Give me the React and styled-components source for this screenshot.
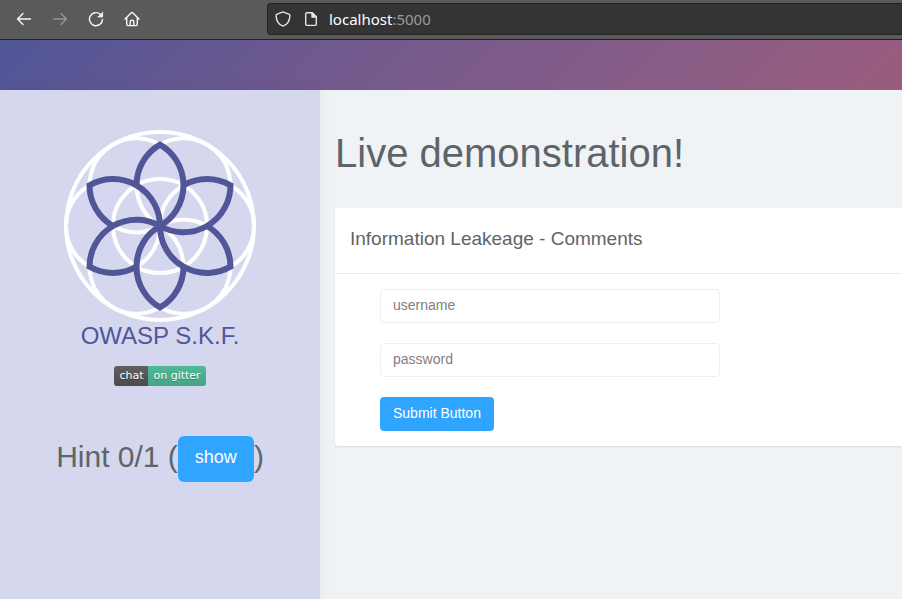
import React from "react";
import styled, { createGlobalStyle } from "styled-components";

const GlobalStyle = createGlobalStyle`
  *, *::before, *::after { box-sizing: border-box; }
  body {
    margin: 0;
    background: #eff3f6;
    color: #5f6468;
    font-family: "Liberation Sans", Arial, sans-serif;
    font-size: 14px;
    line-height: 20px;
  }
  button, input { font: inherit; }
`;

const Page = styled.div`
  min-height: 100vh;
  display: flex;
  flex-direction: column;
`;

const BrowserBar = styled.header`
  display: flex;
  align-items: center;
  height: 40px;
  padding: 0 0 1px 6px;
  background: #5a5a5a;
  border-bottom: 1px solid #222;
`;

const NavButtons = styled.nav`
  display: flex;
  flex: none;
  width: 261px;
`;

const NavButton = styled.button`
  display: flex;
  align-items: center;
  justify-content: center;
  width: 36px;
  height: 32px;
  padding: 0;
  border: 0;
  background: none;
  color: ${(p) => (p.disabled ? "#949494" : "#f8f8f8")};
`;

const AddressBar = styled.div`
  flex: 1;
  display: flex;
  align-items: center;
  gap: 12px;
  height: 32px;
  padding-left: 7px;
  border: 1px solid #212121;
  border-right: 0;
  border-radius: 4px 0 0 4px;
  background: #343434;
  color: #e4e4e4;
`;

const Address = styled.div`
  color: #fff;
  font-family: "Noto Sans", sans-serif;
  font-size: 15px;
  line-height: 20px;
`;

const Port = styled.span`
  color: #9a9a9a;
`;

const Banner = styled.div`
  height: 50px;
  background: linear-gradient(135deg, #505698 0%, #6f598e 35%, #8a5d86 75%, #9b5c7d 100%);
`;

const Columns = styled.div`
  flex: 1;
  display: grid;
  grid-template-columns: 320px minmax(0, 1fr);
`;

const Sidebar = styled.aside`
  display: flex;
  flex-direction: column;
  align-items: center;
  padding-top: 40px;
  background: #d5d7ee;
  box-shadow: 0 0 15px rgba(0, 0, 0, 0.06);
`;

const Brand = styled.div`
  margin: 0 0 16px;
  color: #505698;
  font-size: 24px;
  line-height: 28px;
`;

const Badge = styled.a`
  display: flex;
  height: 20px;
  border-radius: 3px;
  overflow: hidden;
  color: #fff;
  font-family: "DejaVu Sans", sans-serif;
  font-size: 11px;
  line-height: 20px;
  text-decoration: none;
  text-shadow: 0 1px 0 rgba(1, 1, 1, 0.3);
`;

const BadgePart = styled.span`
  padding: 0 5px;
  background: linear-gradient(${(p) => (p.$green ? "#4fb999, #42a588" : "#5f5f5f, #4b4b4b")});
`;

const Hint = styled.div`
  display: flex;
  align-items: flex-start;
  margin-top: 50px;
  font-size: 30px;
  line-height: 42px;
`;

const Button = styled.button`
  padding: ${(p) => (p.$large ? "8px 17px 12px" : "6px 13px 8px")};
  border: 0;
  border-radius: ${(p) => (p.$large ? "6px" : "4px")};
  background: #30a5ff;
  color: #fff;
  font-size: ${(p) => (p.$large ? "18px" : "14px")};
  line-height: ${(p) => (p.$large ? "26px" : "20px")};
`;

const Main = styled.main`
  padding: 40px 0 20px 15px;
`;

const Title = styled.h1`
  margin: 0 0 32px;
  font-size: 40px;
  font-weight: 400;
  line-height: 46px;
`;

const Card = styled.section`
  border-radius: 4px 0 0 4px;
  background: #fff;
  box-shadow: 0 1px 2px rgba(0, 0, 0, 0.1);
`;

const CardTitle = styled.h2`
  margin: 0;
  padding: 18px 15px 21px;
  border-bottom: 1px solid #e9ecef;
  font-size: 19px;
  font-weight: 400;
  line-height: 26px;
`;

const Form = styled.form`
  display: flex;
  flex-direction: column;
  align-items: flex-start;
  gap: 20px;
  padding: 15px 45px;
`;

const TextInput = styled.input`
  width: 100%;
  max-width: 340px;
  height: 34px;
  padding: 4px 12px 6px;
  border: 1px solid #eee;
  border-radius: 4px;
  background: #fff;
  color: #5f6468;
  &::placeholder { color: #808080; opacity: 1; }
`;

const Icon = ({ children, width = 16 }) => (
  <svg width={width} height="16" viewBox={`0 0 ${width} 16`} fill="none" stroke="currentColor"
    strokeWidth="1.4" strokeLinecap="round" strokeLinejoin="round" aria-hidden="true">
    {children}
  </svg>
);

const angles = [0, 60, 120, 180, 240, 300];

const Logo = () => (
  <svg width="192" height="192" viewBox="-96 -96 192 192" fill="none" role="img" aria-label="OWASP S.K.F. logo">
    <g stroke="#fff" strokeWidth="4">
      <circle r="94" />
      <circle r="47" />
      {angles.map((a) => <circle key={a} cx="47" r="47" transform={`rotate(${a})`} />)}
    </g>
    <g stroke="#505698" strokeWidth="6">
      {angles.map((a) => (
        <path key={a} d="M-23.5-40.7A47 47 0 0 1 0-81.4A47 47 0 0 1 0 0" transform={`rotate(${a})`} />
      ))}
    </g>
  </svg>
);

export default function App() {
  return (
    <Page>
      <GlobalStyle />
      <BrowserBar>
        <NavButtons aria-label="Browser">
          <NavButton aria-label="Back"><Icon><path d="M14.5 8H1.5M7 2.5L1.5 8L7 13.5" /></Icon></NavButton>
          <NavButton aria-label="Forward" disabled><Icon><path d="M1.5 8H14.5M9 2.5L14.5 8L9 13.5" /></Icon></NavButton>
          <NavButton aria-label="Reload">
            <Icon>
              <path d="M12.2 3.2A6.5 6.5 0 1 0 14.5 8.4" />
              <path d="M14.6 1.5V6H10.1Z" fill="currentColor" strokeWidth="0.8" />
            </Icon>
          </NavButton>
          <NavButton aria-label="Home">
            <Icon><path d="M1 8L7.3 1.7Q8 1.1 8.7 1.7L15 8M2.7 6.8V13.5Q2.7 14.6 3.8 14.6H12.2Q13.3 14.6 13.3 13.5V6.8M6.2 14.3V10.5Q6.2 9.3 8 9.3T9.8 10.5V14.3" /></Icon>
          </NavButton>
        </NavButtons>
        <AddressBar>
          <Icon><path d="M8 .9L14.3 3.3Q15 3.7 14.9 4.7C14.7 9.5 12.5 13.5 8 15.1C3.5 13.5 1.3 9.5 1.1 4.7Q1 3.7 1.7 3.3Z" /></Icon>
          <Icon width={14}>
            <path d="M3.9 1.7H9.3L13.3 5.7V13.2Q13.3 14.4 12.1 14.4H3.9Q2.7 14.4 2.7 13.2V2.9Q2.7 1.7 3.9 1.7Z" />
            <path d="M9 1.9V6H13.1Z" fill="currentColor" />
          </Icon>
          <Address>localhost<Port>:5000</Port></Address>
        </AddressBar>
      </BrowserBar>
      <Banner />
      <Columns>
        <Sidebar>
          <Logo />
          <Brand>OWASP S.K.F.</Brand>
          <Badge href="#chat">
            <BadgePart>chat</BadgePart>
            <BadgePart $green>on gitter</BadgePart>
          </Badge>
          <Hint>
            <span>Hint 0/1 (</span>
            <Button type="button" $large>show</Button>
            <span>)</span>
          </Hint>
        </Sidebar>
        <Main>
          <Title>Live demonstration!</Title>
          <Card>
            <CardTitle>Information Leakeage - Comments</CardTitle>
            <Form onSubmit={(e) => e.preventDefault()}>
              <TextInput type="text" placeholder="username" aria-label="username" />
              <TextInput type="password" placeholder="password" aria-label="password" />
              <Button type="submit">Submit Button</Button>
            </Form>
          </Card>
        </Main>
      </Columns>
    </Page>
  );
}
